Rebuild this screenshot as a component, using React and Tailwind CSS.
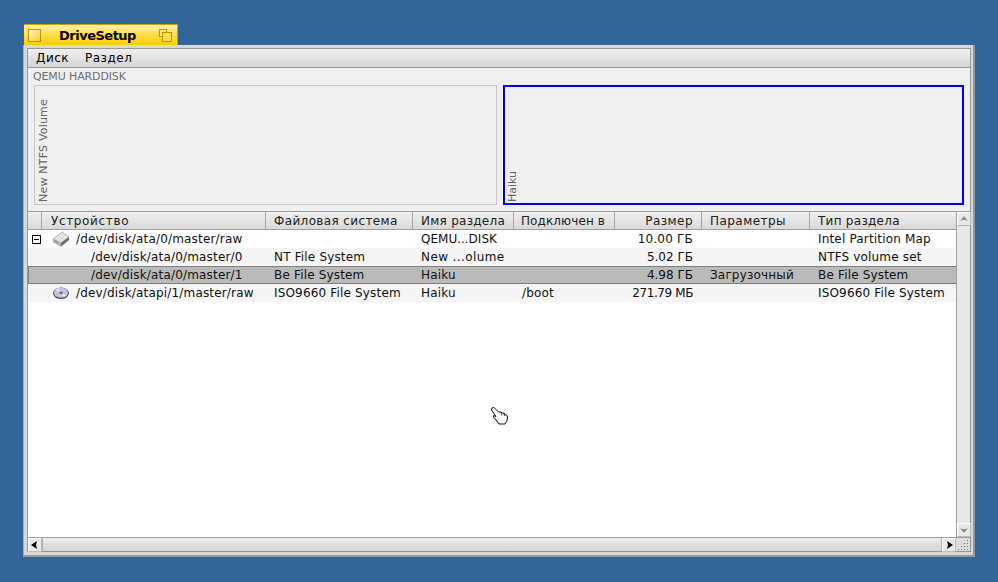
import React from "react";

const cols = [
  { w: "w-[224px]", label: "Устройство", pad: "pl-[9px] tracking-[0.65px]" },
  { w: "w-[147px]", label: "Файловая система", pad: "pl-[8px] tracking-[0.37px]" },
  { w: "w-[101px]", label: "Имя раздела", pad: "pl-[8px] tracking-[0.27px]" },
  { w: "w-[101px]", label: "Подключен в", pad: "pl-[7px] tracking-[0.1px]" },
  { w: "w-[87px]", label: "Размер", pad: "pr-[8px] justify-end tracking-[0.45px]" },
  { w: "w-[108px]", label: "Параметры", pad: "pl-[8px] tracking-[0.45px]" },
  { w: "w-[146px]", label: "Тип раздела", pad: "pl-[8px] tracking-[0.27px]" },
];

const rows = [
  { icon: "disk", exp: true, dev: "/dev/disk/ata/0/master/raw", vals: ["", "QEMU...DISK", "", "10.00 ГБ", "", "Intel Partition Map"], bg: "bg-white", nameTrack: "tracking-[0px]", sizeTrack: "tracking-[0.2px]" },
  { dev: "/dev/disk/ata/0/master/0", vals: ["NT File System", "New ...olume", "", "5.02 ГБ", "", "NTFS volume set"], bg: "bg-[#f5f5f5]", ind: true, nameTrack: "tracking-[0.4px]", sizeTrack: "tracking-[0px]" },
  { dev: "/dev/disk/ata/0/master/1", vals: ["Be File System", "Haiku", "", "4.98 ГБ", "Загрузочный", "Be File System"], bg: "bg-[#bababa]", ind: true, sel: true, nameTrack: "tracking-[0.17px]", sizeTrack: "tracking-[0px]" },
  { icon: "cd", dev: "/dev/disk/atapi/1/master/raw", vals: ["ISO9660 File System", "Haiku", "/boot", "271.79 МБ", "", "ISO9660 File System"], bg: "bg-[#f5f5f5]", nameTrack: "tracking-[0.17px]", sizeTrack: "tracking-[-0.4px]" },
];

function DiskIcon() {
  return (
    <svg width="18" height="16" viewBox="0 0 18 16" className="shrink-0">
      <path d="M1 8 L10 1 L17 6 L17 9 L9 15.5 L1 11 Z" fill="#8a8a8a" />
      <path d="M1 8 L10 1 L17 6 L9 12 Z" fill="#e2e2e2" stroke="#a0a0a0" strokeWidth="0.6" />
      <path d="M1 8 L9 12 L9 15.5 L1 11 Z" fill="#b0b0b0" />
      <path d="M9 12 L17 6 L17 9 L9 15.5 Z" fill="#6e6e6e" />
      <path d="M3 9.6 L6 11" stroke="#c87050" strokeWidth="1" />
    </svg>
  );
}

function CdIcon() {
  return (
    <svg width="18" height="14" viewBox="0 0 18 14" className="shrink-0">
      <ellipse cx="9" cy="7.3" rx="8" ry="5.8" fill="#55556a" />
      <ellipse cx="9" cy="6.8" rx="7" ry="5" fill="#c4c4e0" />
      <path d="M4 4 L8 6 L6 2.5 Z" fill="#eeeeff" />
      <path d="M14 9.5 L10 7.5 L12 11 Z" fill="#eeeeff" />
      <ellipse cx="9" cy="6.8" rx="1.8" ry="1.3" fill="#70708a" />
    </svg>
  );
}

function Hand() {
  return (
    <svg width="20" height="20" viewBox="0 0 20 20" className="absolute left-[490px] top-[406px]">
      <path
        d="M2 2 L4 1.5 L8.5 6 L11 6 L12 7 L14 7 L15 8.5 L16.5 9 L17.5 11 L17 15 L15 18 L9 18 L7 15 L3.5 11 L3.5 9.5 L6 10.5 L1.5 4 Z"
        fill="#fff"
        stroke="#111"
        strokeWidth="1"
        strokeLinejoin="round"
      />
      <path d="M11 6.5 L12 9.5 M14 7.5 L14.5 10" stroke="#111" strokeWidth="0.8" fill="none" />
    </svg>
  );
}

function ScrollBtn({ dir }) {
  const paths = {
    up: "M7 4 L11 9 L8.5 8 L5.5 8 L3 9 Z",
    down: "M7 10 L11 5 L8.5 6 L5.5 6 L3 5 Z",
    left: "M3 7 L9 3 L8 7 L9 11 Z",
    right: "M11 7 L5 3 L6 7 L5 11 Z",
  };
  const active = dir === "left" || dir === "right";
  return (
    <div className="w-[14px] h-[14px] shrink-0 bg-[#e8e8e8] border border-t-white border-l-white border-r-[#bbb] border-b-[#bbb] flex items-center justify-center">
      <svg width="14" height="14" viewBox="0 0 14 14" className="shrink-0">
        <path d={paths[dir]} fill={active ? "#000" : "#8e8e8e"} />
      </svg>
    </div>
  );
}

export default function App() {
  return (
    <div
      className="relative w-[998px] h-[582px] bg-[#336698] overflow-hidden pl-[23px] pt-[24px] text-[12px] leading-none"
      style={{ fontFamily: '"DejaVu Sans", sans-serif' }}
    >
      {/* tab */}
      <div className="ml-[1px] w-[154px] h-[21px] flex items-center border-t border-r border-[#c9a400] bg-gradient-to-b from-[#ffefa8] via-[#ffdc3c] to-[#ffcb00]">
        <div className="ml-[4px] w-[13px] h-[13px] border border-[#bb9a00] bg-gradient-to-br from-[#fff6c0] to-[#ffcb00]" />
        <span className="ml-[18px] w-[100px] font-bold text-[13px] tracking-[-0.5px] text-black">DriveSetup</span>
        <div className="relative w-[13px] h-[13px]">
          <div className="absolute left-0 top-0 w-[8px] h-[8px] border border-[#bb9a00] bg-[#ffe98a]" />
          <div className="absolute left-[3px] top-[3px] w-[10px] h-[10px] border border-[#bb9a00] bg-[#ffdc50]" />
        </div>
      </div>

      {/* frame */}
      <div className="w-[952px] h-[512px] bg-[#d8d8d8] border-r-2 border-b-2 border-[#989898] border-l border-l-[#a8a8a8] p-[3px]">
        <div className="w-[944px] h-[504px] border border-[#989898] bg-[#efefef] flex flex-col">
          {/* menu */}
          <div className="h-[19px] shrink-0 flex items-center pl-[8px] gap-[16px] tracking-[0.5px] bg-gradient-to-b from-[#f0f0f0] to-[#d4d4d4] border-b border-[#a0a0a0] text-black">
            <span>Диск</span>
            <span>Раздел</span>
          </div>

          {/* disk view */}
          <div className="h-[143px] shrink-0 bg-[#efefef] relative flex flex-col">
            <div className="h-[17px] pl-[5px] pt-[3px] text-[11px] text-[#707070] tracking-[-0.13px]">QEMU HARDDISK</div>
            <div className="flex pl-[6px] gap-[6px]">
              <div className="w-[463px] h-[120px] border border-[#c8c8c8] bg-[#eeeeee] flex items-end pl-[3px] pb-[2px]">
                <span className="[writing-mode:vertical-rl] rotate-180 text-[11px] tracking-[0.2px] text-[#666]">New NTFS Volume</span>
              </div>
              <div className="w-[461px] h-[120px] border-2 border-[#0000e0] bg-[#eeeeee] flex items-end pl-[2px] pb-[1px]">
                <span className="[writing-mode:vertical-rl] rotate-180 text-[11px] text-[#666]">Haiku</span>
              </div>
            </div>
          </div>

          {/* list */}
          <div className="flex-1 min-h-0 flex flex-col border-t border-[#a0a0a0]">
            <div className="flex-1 min-h-0 flex">
              <div className="w-[928px] flex flex-col bg-white">
                {/* header */}
                <div className="h-[18px] shrink-0 flex bg-gradient-to-b from-[#f0f0f0] to-[#d8d8d8] border-b border-[#a0a0a0] text-[#222]">
                  <div className="w-[14px] shrink-0 border-r border-[#a8a8a8]" />
                  {cols.map((c) => (
                    <div key={c.label} className={`${c.w} shrink-0 flex items-center ${c.pad} border-r border-[#a8a8a8] last:border-r-0`}>
                      {c.label}
                    </div>
                  ))}
                </div>
                {/* rows */}
                {rows.map((r) => (
                  <div
                    key={r.dev}
                    className={`h-[18px] shrink-0 flex items-center tracking-[0.17px] text-[#111] ${r.bg} ${r.sel ? "border-y border-l border-[#808080]" : ""}`}
                  >
                    <div className={`${r.sel ? "w-[13px]" : "w-[14px]"} shrink-0 flex items-center justify-center pl-[3px]`}>
                      {r.exp && (
                        <div className="w-[9px] h-[9px] border border-black flex items-center justify-center">
                          <div className="w-[5px] h-[1px] bg-black" />
                        </div>
                      )}
                    </div>
                    <div className="w-[224px] shrink-0 flex items-center whitespace-nowrap">
                      {r.ind ? (
                        <span className="pl-[49px]">{r.dev}</span>
                      ) : (
                        <>
                          <div className="w-[34px] shrink-0 flex justify-end pr-[6px]">
                            {r.icon === "disk" ? <DiskIcon /> : <CdIcon />}
                          </div>
                          <span>{r.dev}</span>
                        </>
                      )}
                    </div>
                    <div className="w-[147px] shrink-0 pl-[8px] whitespace-nowrap">{r.vals[0]}</div>
                    <div className={`w-[101px] shrink-0 pl-[8px] whitespace-nowrap ${r.nameTrack}`}>{r.vals[1]}</div>
                    <div className="w-[101px] shrink-0 pl-[8px] whitespace-nowrap">{r.vals[2]}</div>
                    <div className={`w-[87px] shrink-0 pr-[9px] text-right whitespace-nowrap ${r.sizeTrack}`}>{r.vals[3]}</div>
                    <div className="w-[108px] shrink-0 pl-[8px] whitespace-nowrap">{r.vals[4]}</div>
                    <div className="w-[146px] shrink-0 pl-[8px] whitespace-nowrap">{r.vals[5]}</div>
                  </div>
                ))}
              </div>
              {/* vertical scrollbar */}
              <div className="w-[14px] shrink-0 flex flex-col border-l border-[#a0a0a0] bg-[#e8e8e8]">
                <ScrollBtn dir="up" />
                <div className="flex-1" />
                <ScrollBtn dir="down" />
              </div>
            </div>
            {/* horizontal scrollbar */}
            <div className="h-[14px] shrink-0 flex border-t border-[#a0a0a0] bg-[#e0e0e0]">
              <ScrollBtn dir="left" />
              <div className="flex-1 bg-gradient-to-b from-[#ececec] to-[#d4d4d4] border-l border-r border-[#b0b0b0]" />
              <ScrollBtn dir="right" />
              <div className="w-[14px] shrink-0 bg-[#dcdcdc] flex items-end justify-end p-[1px]">
                <svg width="11" height="11" viewBox="0 0 11 11" className="shrink-0">
                  {[[9, 1], [6, 4], [9, 4], [3, 7], [6, 7], [9, 7], [0, 10], [3, 10], [6, 10], [9, 10]].map(([x, y]) => (
                    <rect key={`${x}-${y}`} x={x} y={y} width="1" height="1" fill="#7c7c7c" />
                  ))}
                </svg>
              </div>
            </div>
          </div>
        </div>
      </div>
      <Hand />
    </div>
  );
}
